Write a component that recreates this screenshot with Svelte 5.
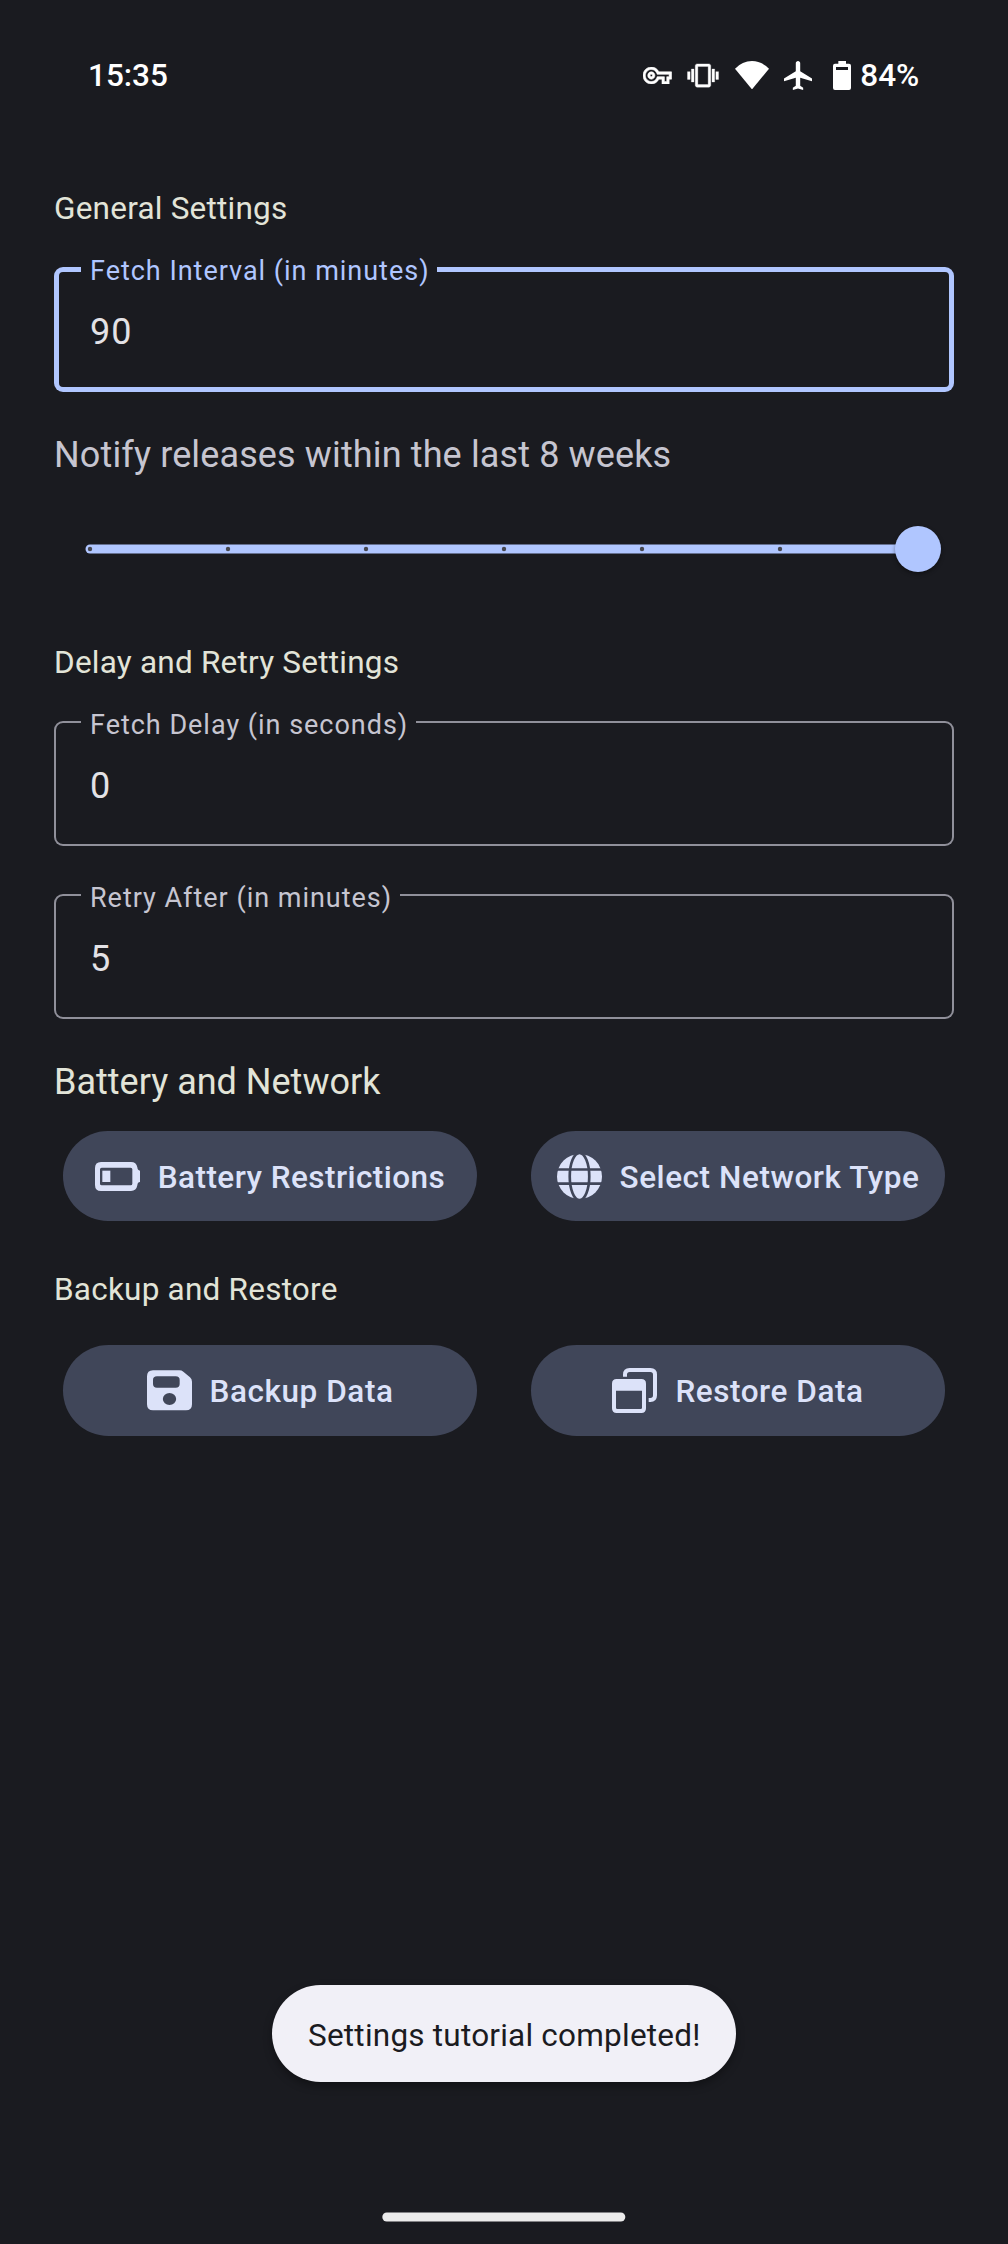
<script>
  let fetchInterval = $state('90');
  let fetchDelay = $state('0');
  let retryAfter = $state('5');

  // Tick positions along the slider, counted from its left end
  const weeks = 8;
  const stops = [0, 1, 2, 3, 4, 5];
</script>

{#snippet field(label, value, focused)}
  <div class="field" class:focused>
    <span class="label">{label}</span>
    <span class="value">{value}</span>
  </div>
{/snippet}

<div class="screen">
  <header class="status">
    <span class="clock">15:35</span>
    <div class="indicators">
      <svg class="key" viewBox="0 5 24 14" preserveAspectRatio="none">
        <path fill-rule="evenodd" d="M22 19h-6v-4h-2.68c-1.14 2.42-3.6 4-6.32 4-3.86 0-7-3.14-7-7s3.14-7 7-7c2.72 0 5.17 1.58 6.32 4H24v6h-2v4zm-4-2h2v-4h2v-2H11.94l-.23-.67C11.01 8.34 9.11 7 7 7c-2.76 0-5 2.24-5 5s2.24 5 5 5c2.11 0 4.01-1.34 4.71-3.33l.23-.67H18v4zM7 15c-1.65 0-3-1.35-3-3s1.35-3 3-3 3 1.35 3 3-1.35 3-3 3zm0-4c-.55 0-1 .45-1 1s.45 1 1 1 1-.45 1-1-.45-1-1-1z" />
      </svg>
      <svg class="vibrate" viewBox="0 0 24 24">
        <path d="M0 15h2V9H0v6zm3 2h2V7H3v10zm19-8v6h2V9h-2zm-3 8h2V7h-2v10zM16.5 3h-9C6.67 3 6 3.67 6 4.5v15c0 .83.67 1.5 1.5 1.5h9c.83 0 1.5-.67 1.5-1.5v-15c0-.83-.67-1.5-1.5-1.5zM16 19H8V5h8v14z" />
      </svg>
      <svg class="wifi" viewBox="0 0 102 85">
        <path d="M0 23Q22 0 51 0T102 23L51 85Z" />
      </svg>
      <svg class="plane" viewBox="2 2 19 20" preserveAspectRatio="none">
        <path d="M21 16v-2l-8-5V3.5c0-.83-.67-1.5-1.5-1.5S10 2.67 10 3.5V9l-8 5v2l8-2.5V19l-2 1.5V22l3.5-1 3.5 1v-1.5L13 19v-5.5l8 2.5z" />
      </svg>
      <svg class="cell" viewBox="0 0 54 87">
        <path fill-rule="evenodd" d="M16 0H39V8H48Q54 8 54 14V81Q54 87 48 87H6Q0 87 0 81V14Q0 8 6 8H16ZM9 18V27H45V18Z" />
      </svg>
      <span>84%</span>
    </div>
  </header>

  <main>
    <h2 class="first">General Settings</h2>
    {@render field('Fetch Interval (in minutes)', fetchInterval, true)}

    <p class="notify">Notify releases within the last {weeks} weeks</p>
    <svg class="slider" viewBox="0 0 900 108">
      <rect class="track" x="31.5" y="49.5" width="832.5" height="9" rx="4.5" />
      {#each stops as stop}
        <circle class="tick" cx={36 + stop * 138} cy="54" r="2.2" />
      {/each}
      <circle class="thumb" cx="864" cy="54" r="23" />
    </svg>

    <h2 class="delay">Delay and Retry Settings</h2>
    {@render field('Fetch Delay (in seconds)', fetchDelay, false)}
    <div class="spacer"></div>
    {@render field('Retry After (in minutes)', retryAfter, false)}

    <h2 class="large">Battery and Network</h2>
    <div class="buttons">
      <button class="snug">
        <svg viewBox="0 0 135 135">
          <path fill-rule="evenodd" d="M18 24H108Q124 24 127 40Q128 50 135 50V84Q128 84 127 94Q124 111 108 111H18Q0 111 0 93V42Q0 24 18 24ZM20 41Q15 41 15 46V89Q15 94 20 94H107Q112 94 112 89V46Q112 41 107 41Z" />
          <rect x="22" y="50" width="24" height="34" />
        </svg>
        <span>Battery Restrictions</span>
      </button>
      <button>
        <svg viewBox="0 0 135 135">
          <circle cx="67.5" cy="67.5" r="67.5" />
          <g class="cut">
            <ellipse cx="67.5" cy="67.5" rx="29.3" ry="71" />
            <path d="M0 46.5H135M0 89H135" />
          </g>
        </svg>
        <span>Select Network Type</span>
      </button>
    </div>

    <h2 class="backup">Backup and Restore</h2>
    <div class="buttons tall">
      <button>
        <svg viewBox="0 0 135 135">
          <path fill-rule="evenodd" d="M18 7H97Q104 7 109 11L129 28Q135 33 135 41V109Q135 127 117 127H18Q0 127 0 109V25Q0 7 18 7ZM30 25Q18 25 18 36V48Q18 59 30 59H86Q98 59 98 48V36Q98 25 86 25ZM67.5 75A20 18 0 1 0 67.5 111A20 18 0 1 0 67.5 75Z" />
        </svg>
        <span>Backup Data</span>
      </button>
      <button>
        <svg viewBox="0 0 135 135">
          <path fill-rule="evenodd" d="M14 33H88Q102 33 102 47V121Q102 135 88 135H14Q0 135 0 121V47Q0 33 14 33ZM12 68V119Q12 123 16 123H86Q90 123 90 119V68Z" />
          <path class="line" d="M39 26V20Q39 6 53 6H115Q129 6 129 20V82Q129 96 115 96H110" />
        </svg>
        <span>Restore Data</span>
      </button>
    </div>
  </main>

  <div class="snackbar">Settings tutorial completed!</div>
  <svg class="home" viewBox="0 0 244 10">
    <rect x="0.3" y="0.5" width="243" height="9" rx="4.5" />
  </svg>
</div>

<style>
  :global(body) {
    background: #1a1b20;
  }

  .screen {
    box-sizing: border-box;
    display: flex;
    flex-direction: column;
    min-height: 2244px;
    padding-bottom: 22px;
    background: #1a1b20;
    color: #e3e2e6;
    font-family: Roboto, sans-serif;
    font-size: 31.5px;
  }

  svg {
    display: block;
    flex: none;
    fill: currentColor;
  }

  .status {
    box-sizing: border-box;
    display: flex;
    align-items: center;
    justify-content: space-between;
    height: 150px;
    padding: 0 88.7px 0 88px;
    color: #fff;
    font-weight: 500;
  }

  .indicators {
    display: flex;
    align-items: center;
  }

  .key {
    width: 28.5px;
    height: 17px;
    margin-right: 15px;
    stroke: currentColor;
    stroke-width: 0.5;
  }

  .vibrate {
    width: 32px;
    height: 31px;
    margin-right: 16.5px;
    stroke: currentColor;
    stroke-width: 0.25;
  }

  .wifi {
    width: 34px;
    height: 28.4px;
    margin-right: 14.7px;
  }

  .plane {
    width: 28px;
    height: 29px;
    margin-right: 21.3px;
  }

  .cell {
    width: 18px;
    height: 29px;
    margin-right: 9.3px;
  }

  main {
    display: flex;
    flex-direction: column;
    padding: 0 54px;
  }

  h2 {
    margin: 0 0 36px;
    color: #e2e4d8;
    font-size: 31.5px;
    font-weight: 400;
    line-height: 45px;
    letter-spacing: 0.22px;
  }

  h2.first {
    margin-top: 36px;
  }

  h2.delay {
    margin-top: 37px;
  }

  h2.large {
    margin: 36px 0 22px;
    font-size: 36px;
    line-height: 54px;
    letter-spacing: 0;
  }

  h2.backup {
    margin: 46px 0 33px;
  }

  .field {
    position: relative;
    box-sizing: border-box;
    display: flex;
    align-items: center;
    height: 125px;
    padding: 4px 36px 0;
    border-radius: 9px;
    box-shadow: inset 0 0 0 2px #90909a;
  }

  .field.focused {
    box-shadow: inset 0 0 0 5px #b0c6ff;
  }

  .label {
    position: absolute;
    top: -9px;
    left: 27px;
    padding: 0 7.5px 0 9px;
    background: #1a1b20;
    color: #c6c5d0;
    font-size: 27px;
    line-height: 27px;
    letter-spacing: 0.98px;
    white-space: nowrap;
  }

  .focused .label {
    color: #b0c6ff;
  }

  .value {
    font-size: 36px;
    letter-spacing: 0.9px;
  }

  .notify {
    margin: 36px 0 13px;
    color: #c6c5d0;
    font-size: 36px;
    line-height: 54px;
    letter-spacing: 0.13px;
  }

  .slider {
    width: 900px;
    height: 108px;
    overflow: visible;
  }

  .track,
  .thumb {
    fill: #b0c6ff;
  }

  .thumb {
    filter: drop-shadow(0 2px 2px rgba(0, 0, 0, 0.4));
  }

  .tick {
    fill: #45464f;
  }

  .spacer {
    height: 48px;
  }

  .buttons {
    display: grid;
    grid-template-columns: 1fr 1fr;
    gap: 54px;
    padding: 0 9px;
  }

  button {
    display: flex;
    align-items: center;
    justify-content: center;
    gap: 18px;
    height: 90px;
    padding: 0;
    border: 0;
    border-radius: 45px;
    background: #404659;
    color: #dce2f9;
    font: 500 31.5px Roboto, sans-serif;
    letter-spacing: 0.56px;
    white-space: nowrap;
  }

  button span {
    padding-top: 2px;
  }

  .snug {
    letter-spacing: 0.45px;
  }

  .tall button {
    height: 91px;
    border-radius: 45.5px;
  }

  button svg {
    width: 45px;
    height: 45px;
  }

  .cut {
    fill: none;
    stroke: #404659;
    stroke-width: 8;
  }

  .line {
    fill: none;
    stroke: currentColor;
    stroke-width: 12;
  }

  .snackbar {
    box-sizing: border-box;
    align-self: center;
    width: 464px;
    height: 97px;
    margin: auto 0 130px;
    padding-left: 36px;
    border-radius: 48.5px;
    background: #f1f0f7;
    box-shadow: 0 4px 8px rgba(0, 0, 0, 0.35);
    color: #1b1b1f;
    line-height: 101px;
    letter-spacing: 0.22px;
    white-space: nowrap;
  }

  .home {
    align-self: center;
    width: 244px;
    height: 10px;
    color: #ececec;
  }
</style>
